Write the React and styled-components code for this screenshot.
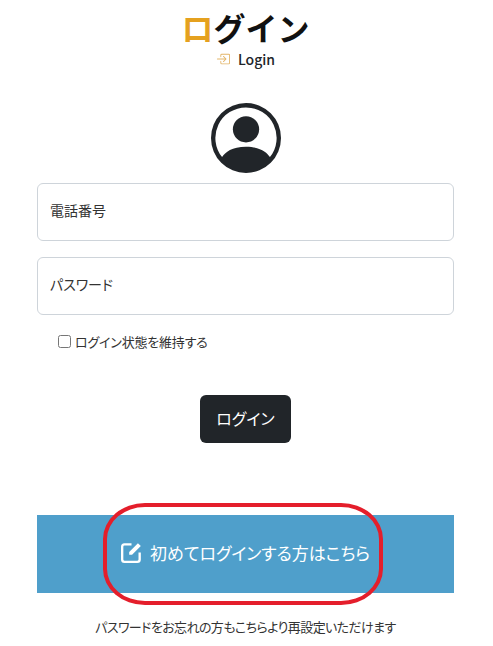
import styled, { createGlobalStyle } from "styled-components";
import { BsPersonCircle, BsBoxArrowInRight } from "react-icons/bs";

const FONT = `"Noto Sans CJK JP", "Noto Sans", sans-serif`;

const GlobalStyle = createGlobalStyle`
	* {
		box-sizing: border-box;
	}
	body {
		margin: 0;
		background: #fff;
		color: #212529;
		font-family: ${FONT};
	}
`;

const Page = styled.div`
	width: 493px;
	height: 646px;
	padding: 0 39px 0 37px;
	overflow: hidden;
	display: flex;
	flex-direction: column;
`;

const Header = styled.header`
	display: flex;
	flex-direction: column;
	align-items: center;
	height: 103px;
	padding-top: 4px;
`;

const Title = styled.h1`
	margin: 0;
	font-size: 32px;
	line-height: 46px;
	font-weight: 700;
	color: #111;
	span {
		color: #e5a11f;
	}
`;

const SubTitle = styled.div`
	display: flex;
	align-items: center;
	gap: 8px;
	font-size: 14px;
	line-height: 20px;
	font-weight: 500;
	margin-top: -1px;
	svg {
		color: #e3b568;
		font-size: 14px;
	}
`;

const Avatar = styled.div`
	display: flex;
	justify-content: center;
	height: 80px;
	color: #212529;
	font-size: 70px;
	line-height: 0;
`;

const Field = styled.input`
	display: block;
	width: 100%;
	height: 58px;
	margin-bottom: 16px;
	padding: 0 12px 4px;
	border: 1px solid #ced4da;
	border-radius: 6px;
	font-family: ${FONT};
	font-size: 14px;
	font-feature-settings: "palt";
	outline: none;
	&::placeholder {
		color: #333;
		opacity: 1;
	}
`;

const Remember = styled.label`
	display: flex;
	align-items: center;
	gap: 4px;
	height: 20px;
	margin: 0 0 44px 21px;
	font-size: 13px;
	letter-spacing: -0.2px;
	font-feature-settings: "palt";
	color: #333;
	input {
		width: 13px;
		height: 13px;
		margin: 0;
	}
`;

const LoginButton = styled.button`
	display: block;
	width: 91px;
	height: 48px;
	margin: 0 auto 72px;
	padding: 0 0 2px;
	border: 0;
	border-radius: 6px;
	background: #212529;
	color: #fff;
	font-family: ${FONT};
	font-size: 16px;
	font-feature-settings: "palt";
`;

const Band = styled.div`
	position: relative;
	display: flex;
	align-items: center;
	justify-content: center;
	gap: 8px;
	height: 78px;
	margin-bottom: 24px;
	padding-bottom: 4px;
	background: #4f9fcb;
	color: #fff;
	font-size: 17px;
	letter-spacing: -0.05px;
	font-feature-settings: "palt";
`;

const Highlight = styled.div`
	position: absolute;
	left: 66px;
	top: -12px;
	width: 280px;
	height: 102px;
	border: 4px solid #e41e2b;
	border-radius: 42px / 36px;
`;

const Note = styled.p`
	margin: 0;
	text-align: center;
	font-size: 13px;
	line-height: 20px;
	letter-spacing: -0.6px;
	font-feature-settings: "palt";
	color: #333;
`;

function EditIcon() {
	return (
		<svg width="21" height="21" viewBox="1 1 18 18" fill="none">
			<path
				d="M10 3H4a2 2 0 0 0-2 2v11a2 2 0 0 0 2 2h11a2 2 0 0 0 2-2V10"
				stroke="currentColor"
				strokeWidth="2"
			/>
			<path d="M8 9.5 15.5 2 18 4.5 10.5 12H8Z" fill="currentColor" />
		</svg>
	);
}

export default function App() {
	return (
		<>
			<GlobalStyle />
			<Page>
				<Header>
					<Title>
						<span>ロ</span>グイン
					</Title>
					<SubTitle>
						<BsBoxArrowInRight />
						Login
					</SubTitle>
				</Header>
				<Avatar>
					<BsPersonCircle />
				</Avatar>
				<Field placeholder="電話番号" />
				<Field placeholder="パスワード" type="password" />
				<Remember>
					<input type="checkbox" />
					ログイン状態を維持する
				</Remember>
				<LoginButton>ログイン</LoginButton>
				<Band>
					<EditIcon />
					初めてログインする方はこちら
					<Highlight />
				</Band>
				<Note>パスワードをお忘れの方もこちらより再設定いただけます</Note>
			</Page>
		</>
	);
}
